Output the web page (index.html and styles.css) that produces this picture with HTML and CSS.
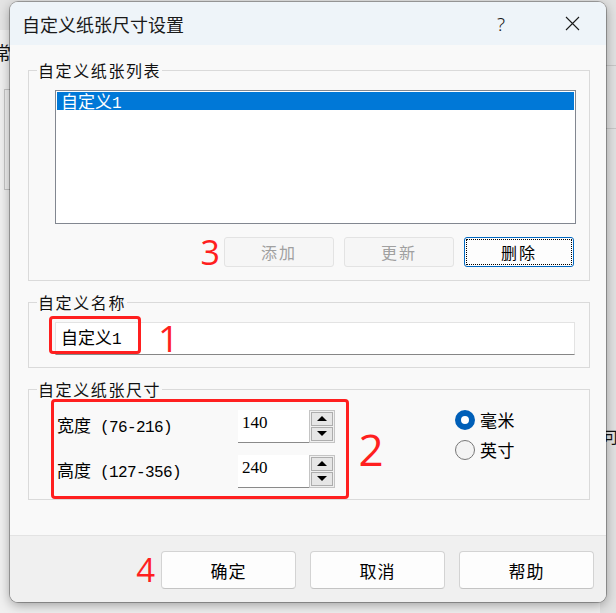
FILE: index.html
```html
<!DOCTYPE html>
<html lang="zh-CN">
<head>
<meta charset="utf-8">
<title>自定义纸张尺寸设置</title>
<link rel="stylesheet" href="styles.css">
</head>
<body>
<div class="backdrop">
  <div class="bg-top"></div>
  <span class="bg-char">常</span>
  <div class="bg-box"></div>
  <div class="bg-right">
    <div class="bg-line l1"></div>
    <div class="bg-line l2"></div>
    <span class="bg-char2">可</span>
  </div>
</div>

<div class="dialog">
  <div class="titlebar">
    <span class="title">自定义纸张尺寸设置</span>
    <span class="help">?</span>
    <span class="close">
      <svg width="15" height="15" viewBox="0 0 15 15"><path d="M1 1 L14 14 M14 1 L1 14" stroke="#1b1b1b" stroke-width="1.1" fill="none"/></svg>
    </span>
  </div>

  <div class="content">
    <fieldset class="group">
      <legend>自定义纸张列表</legend>
      <div class="gbody g-list">
        <div class="listbox">
          <div class="item selected">自定义<span class="mono">1</span></div>
        </div>
        <div class="btnrow">
          <span class="mark m3">3</span>
          <button class="btn disabled">添加</button>
          <button class="btn disabled">更新</button>
          <button class="btn focused">删除</button>
        </div>
      </div>
    </fieldset>

    <fieldset class="group">
      <legend>自定义名称</legend>
      <div class="gbody g-name">
        <div class="field">
          <span class="ftext">自定义<span class="mono">1</span></span>
          <span class="redbox rb1"></span>
          <span class="mark m1">1</span>
        </div>
      </div>
    </fieldset>

    <fieldset class="group">
      <legend>自定义纸张尺寸</legend>
      <div class="gbody g-size">
        <div class="dims">
          <div class="dimrow">
            <span class="dlabel">宽度<span class="mono"> (76-216)</span></span>
            <div class="spin">
              <div class="spin-edit">140</div>
              <div class="spin-btns">
                <div class="sbtn"><span class="tri up"></span></div>
                <div class="sbtn"><span class="tri down"></span></div>
              </div>
            </div>
          </div>
          <div class="dimrow">
            <span class="dlabel">高度<span class="mono"> (127-356)</span></span>
            <div class="spin">
              <div class="spin-edit">240</div>
              <div class="spin-btns">
                <div class="sbtn"><span class="tri up"></span></div>
                <div class="sbtn"><span class="tri down"></span></div>
              </div>
            </div>
          </div>
          <span class="redbox rb2"></span>
        </div>
        <span class="mark m2">2</span>
        <div class="units">
          <label class="radio"><span class="circle checked"></span><span class="rtext">毫米</span></label>
          <label class="radio"><span class="circle"></span><span class="rtext">英寸</span></label>
        </div>
      </div>
    </fieldset>
  </div>

  <div class="footer">
    <span class="mark m4">4</span>
    <button class="btn big">确定</button>
    <button class="btn big">取消</button>
    <button class="btn big">帮助</button>
  </div>
</div>
</body>
</html>
```

FILE: styles.css
```css
* { box-sizing: border-box; }

html, body {
  margin: 0;
  padding: 0;
  width: 616px;
  height: 613px;
  overflow: hidden;
}

body {
  background: #ececec;
  font-family: "Noto Sans CJK SC", sans-serif;
  color: #000;
  position: relative;
}

/* window behind the dialog */
.backdrop {
  position: absolute;
  inset: 0;
  background: #f0f0f0;
}
.bg-top {
  height: 30px;
  background: #e4e4e4;
}
.bg-char {
  position: absolute;
  left: -7px;
  top: 40px;
  font-size: 18px;
  line-height: 24px;
  color: #111;
}
.bg-box {
  position: absolute;
  left: 4px;
  top: 89px;
  width: 30px;
  height: 101px;
  border: 1px solid #c4c4c4;
}
.bg-right {
  position: absolute;
  left: 600px;
  top: 0;
  width: 16px;
  height: 613px;
  background: #e2e2e2;
}
.bg-line {
  position: absolute;
  left: 0;
  right: 0;
  height: 1px;
  background: #c8c8c8;
}
.l1 { top: 65px; }
.l2 { top: 128px; }
.bg-char2 {
  position: absolute;
  left: 3px;
  top: 426px;
  font-size: 16px;
  line-height: 20px;
  color: #111;
}

/* dialog window */
.dialog {
  position: absolute;
  left: 10px;
  top: 2px;
  width: 596px;
  height: 600px;
  background: #f9f9f9;
  border-radius: 8px;
  overflow: hidden;
  box-shadow: 0 0 0 1px rgba(0, 0, 0, 0.28), 0 3px 12px rgba(0, 0, 0, 0.35);
  display: flex;
  flex-direction: column;
}

.titlebar {
  height: 43px;
  flex: none;
  background: #eef4f9;
  display: flex;
  align-items: center;
  padding-left: 12px;
}
.title {
  font-size: 18px;
  line-height: 24px;
  color: #1a1a1a;
  flex: 1;
}
.help {
  width: 46px;
  text-align: center;
  font-family: "Noto Sans", sans-serif;
  font-weight: 300;
  font-size: 19px;
  line-height: 24px;
  color: #1a1a1a;
  margin-right: 25px;
}
.close {
  width: 46px;
  height: 24px;
  display: flex;
  align-items: center;
  justify-content: center;
  margin-right: 11px;
}

.content {
  flex: 1;
  min-height: 0;
  padding: 15px 16px 33px 18px;
  display: flex;
  flex-direction: column;
  gap: 11px;
}

.group {
  margin: 0;
  padding: 0;
  min-width: 0;
  border: 1px solid #dadada;
}
.group legend {
  margin-left: 8px;
  padding: 0 1px;
  font-size: 16px;
  line-height: 20px;
  letter-spacing: 1.6px;
  color: #111;
}

.mono {
  font-family: "Liberation Mono", "Noto Sans CJK SC", monospace;
}

/* group 1 */
.g-list {
  padding: 10px 13px 13px 26px;
}
.listbox {
  height: 134px;
  border: 1px solid #828790;
  background: #fff;
  padding: 1px;
}
.item {
  height: 18px;
  line-height: 18px;
  font-size: 17px;
  padding-left: 4px;
}
.item .mono { font-size: 16px; }
.item.selected {
  background: #0078d7;
  color: #fff;
}
.btnrow {
  margin-top: 13px;
  height: 30px;
  display: flex;
  justify-content: flex-end;
  align-items: center;
  gap: 10px;
  padding-right: 2px;
}

.btn {
  font-family: "Noto Sans CJK SC", sans-serif;
  font-size: 16px;
  letter-spacing: 2px;
  width: 110px;
  height: 30px;
  padding: 0;
  border-radius: 3px;
  background: #fdfdfd;
  border: 1px solid #d0d0d0;
  color: #000;
}
.btn.disabled {
  background: #f6f6f6;
  border-color: #e3e3e3;
  color: #a0a0a0;
}
.btn.focused {
  border-color: #0067c0;
  outline: 1px dotted #000;
  outline-offset: -3px;
}
.btn.big {
  width: 135px;
  height: 38px;
  border-radius: 4px;
  font-size: 17px;
  letter-spacing: 1px;
  border-color: #d3d3d3;
  border-bottom-color: #c4c4c4;
}

/* red annotations */
.mark {
  color: #ff1f1f;
  font-family: "Open Sans", "Noto Sans", sans-serif;
  font-weight: 400;
  line-height: 1;
}
.m3 {
  font-size: 34px;
  line-height: 30px;
  margin-right: -6px;
}
.m1 {
  position: absolute;
  left: 102px;
  top: -4px;
  font-size: 37px;
}
.m2 {
  font-size: 44px;
  width: 30px;
  margin-left: 21px;
  align-self: center;
  text-align: center;
}
.m4 {
  font-size: 33px;
  line-height: 38px;
  margin-right: -8px;
}
.redbox {
  position: absolute;
  border: 3px solid #ff1f1f;
  border-radius: 4px;
}
.rb1 {
  left: -7px;
  top: -7px;
  width: 92px;
  height: 38px;
}
.rb2 {
  left: -6px;
  top: -11px;
  width: 298px;
  height: 100px;
}

/* group 2 */
.g-name {
  padding: 10px 14px 12px 26px;
}
.field {
  position: relative;
  height: 33px;
  background: #fff;
  border: 1px solid #e3e3e3;
  border-bottom-color: #868686;
  display: flex;
  align-items: center;
  padding-left: 5px;
}
.ftext {
  font-size: 17px;
  line-height: 20px;
}
.ftext .mono { font-size: 16px; }

/* group 3 */
.g-size {
  padding: 11px 0 12px 28px;
  display: flex;
}
.dims {
  position: relative;
  display: flex;
  flex-direction: column;
  gap: 13px;
}
.dimrow {
  display: flex;
  align-items: center;
  height: 32px;
}
.dlabel {
  width: 181px;
  font-size: 17px;
  line-height: 20px;
  white-space: pre;
}
.dlabel .mono {
  font-size: 16px;
  letter-spacing: -0.6px;
}
.spin {
  display: flex;
  height: 33px;
}
.spin-edit {
  width: 71px;
  background: #fff;
  border-bottom: 1px solid #8a8a8a;
  font-family: "Liberation Serif", serif;
  font-size: 17px;
  line-height: 20px;
  padding: 3px 0 0 4px;
}
.spin-btns {
  width: 26px;
  border: 1px solid #c4c4c4;
  background: #f0f0f0;
  display: flex;
  flex-direction: column;
  padding: 1px;
  gap: 1px;
}
.sbtn {
  flex: 1;
  background: #e6e6e6;
  border: 1px solid #adadad;
  display: flex;
  align-items: center;
  justify-content: center;
}
.tri {
  width: 0;
  height: 0;
  border-left: 5px solid transparent;
  border-right: 5px solid transparent;
}
.tri.up { border-bottom: 5px solid #000; }
.tri.down { border-top: 5px solid #000; }

.units {
  margin-left: 69px;
  display: flex;
  flex-direction: column;
  gap: 10px;
  padding-top: 0;
}
.radio {
  display: flex;
  align-items: center;
  height: 20px;
  gap: 5px;
}
.circle {
  width: 20px;
  height: 20px;
  border-radius: 50%;
  border: 1px solid #777;
  background: #f3f3f3;
}
.circle.checked {
  border: 6px solid #005fb8;
  background: #fff;
}
.rtext {
  font-size: 17px;
  line-height: 20px;
  letter-spacing: 0.5px;
}

/* footer */
.footer {
  height: 67px;
  flex: none;
  background: #f0f0f0;
  border-top: 1px solid #e3e3e3;
  display: flex;
  justify-content: flex-end;
  align-items: flex-start;
  padding: 15px 12px 0 0;
  gap: 14px;
}
```
